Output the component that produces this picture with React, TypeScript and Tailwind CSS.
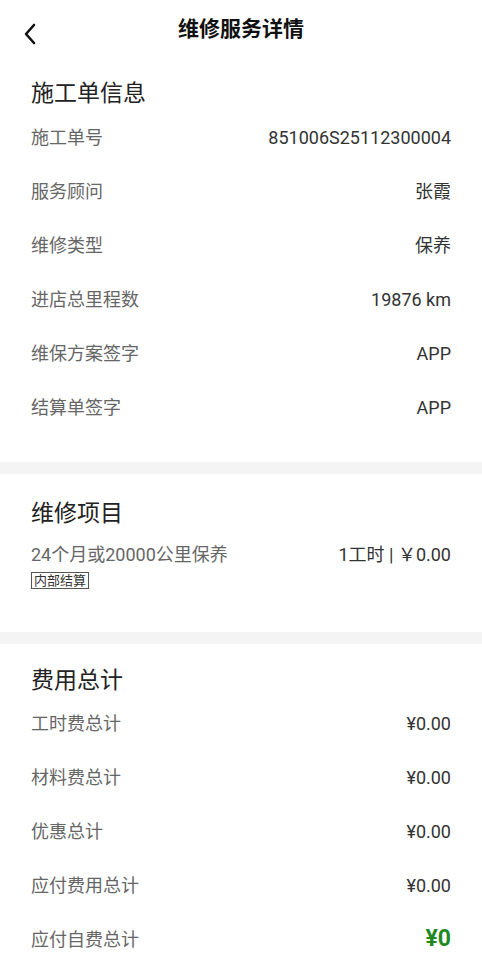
const font = { fontFamily: 'Roboto, "Noto Sans CJK SC", sans-serif' };

const orderRows: [string, string][] = [
  ['施工单号', '851006S25112300004'],
  ['服务顾问', '张霞'],
  ['维修类型', '保养'],
  ['进店总里程数', '19876 km'],
  ['维保方案签字', 'APP'],
  ['结算单签字', 'APP'],
];

const costRows: [string, string][] = [
  ['工时费总计', '¥0.00'],
  ['材料费总计', '¥0.00'],
  ['优惠总计', '¥0.00'],
  ['应付费用总计', '¥0.00'],
];

function Row({ label, value }: { label: string; value: string }) {
  return (
    <div className="flex h-[54px] items-center justify-between">
      <span className="text-[18px] text-[#666666]">{label}</span>
      <span className="text-[18px] text-[#333333]">{value}</span>
    </div>
  );
}

function Divider() {
  return <div className="h-[12px] bg-[#f4f4f4]" />;
}

export default function App() {
  return (
    <div className="min-h-[960px] bg-white" style={font}>
      <header className="relative flex h-[60px] items-center justify-center">
        <button className="absolute left-[18px] top-[18px] p-1">
          <svg width="16" height="24" viewBox="0 0 16 24" fill="none">
            <path d="M12 3L4 12l8 9" stroke="#111" strokeWidth="2.6" strokeLinecap="round" strokeLinejoin="round" />
          </svg>
        </button>
        <h1 className="text-[21px] font-bold text-[#111]">维修服务详情</h1>
      </header>

      <section className="px-[31px] pt-[18px] pb-[28px]">
        <h2 className="text-[23px] leading-[32px] text-[#222]">施工单信息</h2>
        {orderRows.map(([l, v]) => (
          <Row key={l} label={l} value={v} />
        ))}
      </section>

      <Divider />

      <section className="px-[31px] pt-[24px] pb-[43px]">
        <h2 className="text-[23px] leading-[32px] text-[#222]">维修项目</h2>
        <div className="mt-[13px] flex items-center justify-between">
          <span className="text-[18px] leading-[24px] text-[#666666]">24个月或20000公里保养</span>
          <span className="text-[18px] leading-[24px] text-[#333333]">1工时 | ￥0.00</span>
        </div>
        <div className="mt-[5px] flex">
          <span className="border border-[#555] px-[2px] text-[13px] leading-[15px] text-[#333]">内部结算</span>
        </div>
      </section>

      <Divider />

      <section className="px-[31px] pt-[22px]">
        <h2 className="text-[23px] leading-[30px] text-[#222]">费用总计</h2>
        {costRows.map(([l, v]) => (
          <Row key={l} label={l} value={v} />
        ))}
        <div className="flex h-[54px] items-center justify-between">
          <span className="text-[18px] text-[#666666]">应付自费总计</span>
          <span className="text-[23px] font-bold text-[#1f8a1f]">¥0</span>
        </div>
      </section>
    </div>
  );
}
